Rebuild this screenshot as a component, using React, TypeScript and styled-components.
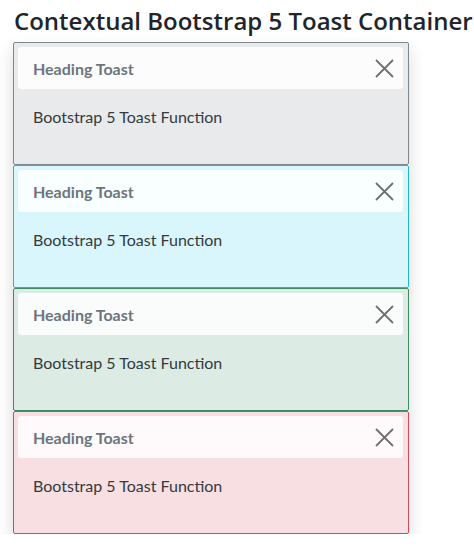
import styled, { createGlobalStyle } from "styled-components";

const GlobalStyle = createGlobalStyle`
  body {
    margin: 0;
    background: #fff;
    font-family: Lato, "Liberation Sans", sans-serif;
  }
`;

const Page = styled.div`
  padding: 7px 0 0 14px;
`;

const Title = styled.h2`
  margin: 0 0 7px;
  font-family: "Open Sans", Lato, sans-serif;
  font-size: 24px;
  font-weight: 600;
  line-height: 28px;
  color: #212529;
  white-space: nowrap;
`;

const ToastStack = styled.div`
  width: 396px;
  margin-left: -1px;
  box-shadow: 0 8px 16px rgba(0, 0, 0, 0.15);
`;

const variants = {
  secondary: { bg: "#e9eaec", border: "#7f868c" },
  info: { bg: "#d8f6fc", border: "#1fb8d3" },
  success: { bg: "#dcece4", border: "#3e8a62" },
  danger: { bg: "#f8dfe1", border: "#d1495a" },
};

type Variant = keyof typeof variants;

const Toast = styled.div<{ $variant: Variant }>`
  box-sizing: border-box;
  background: ${(p) => variants[p.$variant].bg};
  border: 1px solid ${(p) => variants[p.$variant].border};
  border-radius: 2px;
  padding: 4px 5px 0 4px;
  height: 123px;
`;

const ToastHeader = styled.div`
  display: flex;
  align-items: center;
  justify-content: space-between;
  height: 42px;
  padding: 0 9px 0 15px;
  background: rgba(255, 255, 255, 0.85);
  border-radius: 3px;
  box-sizing: border-box;
`;

const HeaderTitle = styled.strong`
  font-size: 16px;
  font-weight: 700;
  color: #6c757d;
`;

const CloseButton = styled.button`
  display: flex;
  align-items: center;
  justify-content: center;
  width: 20px;
  height: 20px;
  padding: 0;
  border: none;
  background: none;
  cursor: pointer;
  color: #6f6f6f;
`;

const ToastBody = styled.div`
  padding: 16px 15px;
  font-size: 16px;
  line-height: 24px;
  color: #343a40;
`;

const CloseIcon = () => (
  <svg width="19" height="19" viewBox="0 0 19 19">
    <path d="M1 1L18 18M18 1L1 18" stroke="currentColor" strokeWidth="1.8" />
  </svg>
);

const items: Variant[] = ["secondary", "info", "success", "danger"];

export default function App() {
  return (
    <Page>
      <GlobalStyle />
      <Title>Contextual Bootstrap 5 Toast Container</Title>
      <ToastStack>
        {items.map((v) => (
          <Toast key={v} $variant={v}>
            <ToastHeader>
              <HeaderTitle>Heading Toast</HeaderTitle>
              <CloseButton aria-label="Close">
                <CloseIcon />
              </CloseButton>
            </ToastHeader>
            <ToastBody>Bootstrap 5 Toast Function</ToastBody>
          </Toast>
        ))}
      </ToastStack>
    </Page>
  );
}
